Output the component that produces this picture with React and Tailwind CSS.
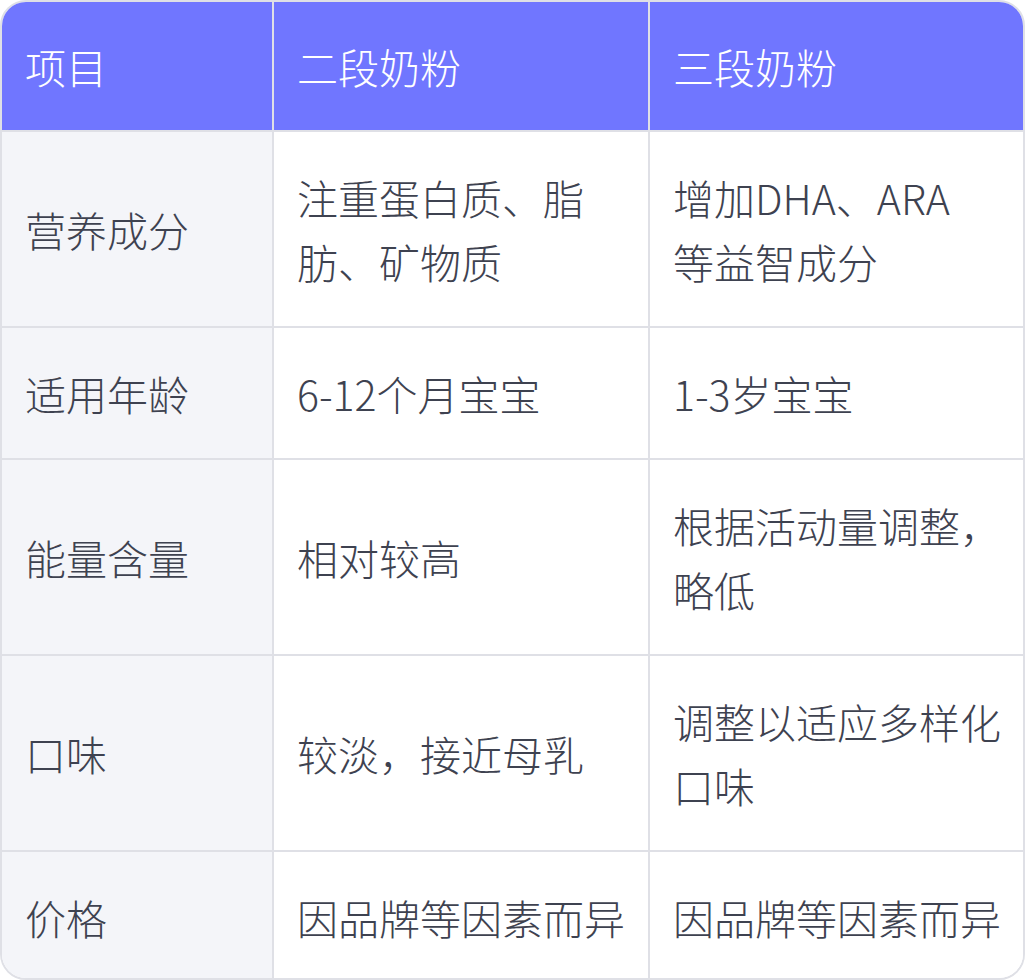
const COLUMNS = ['项目', '二段奶粉', '三段奶粉'];

// "\n" marks where the reference breaks the line
const ROWS = [
  ['营养成分', '注重蛋白质、脂\n肪、矿物质', '增加DHA、ARA\n等益智成分'],
  ['适用年龄', '6-12个月宝宝', '1-3岁宝宝'],
  ['能量含量', '相对较高', '根据活动量调整，\n略低'],
  ['口味', '较淡，接近母乳', '调整以适应多样化\n口味'],
  ['价格', '因品牌等因素而异', '因品牌等因素而异'],
];

function Cell({ text }) {
  const parts = text.split('\n');
  return parts.map((p, i) => (
    <span key={i}>
      {p}
      {i < parts.length - 1 && <br />}
    </span>
  ));
}

export default function App() {
  return (
    <div
      className="w-[1025px] h-[980px] bg-white"
      style={{ fontFamily: '"Noto Sans CJK SC", "Noto Sans", sans-serif' }}
    >
      <div className="w-[1025px] h-[980px] border-2 border-[#dfe0e6] rounded-[26px] overflow-hidden">
        <table className="w-full border-collapse table-fixed text-[41px] leading-[64px] font-light">
          <colgroup>
            <col className="w-[271px]" />
            <col className="w-[376px]" />
            <col />
          </colgroup>
          <thead>
            <tr className="bg-[#7076ff] text-white h-[129px]">
              {COLUMNS.map((c, i) => (
                <th
                  key={c}
                  className={`text-left font-light pl-[23px] pr-[12px] align-middle whitespace-nowrap ${
                    i > 0 ? 'border-l-2 border-[#dfe0e6]' : ''
                  }`}
                >
                  {c}
                </th>
              ))}
            </tr>
          </thead>
          <tbody className="text-[#3e4250]">
            {ROWS.map((row) => (
              <tr key={row[0]} className="border-t-2 border-[#dfe0e6]">
                {row.map((cell, i) => (
                  <td
                    key={i}
                    className={`pl-[23px] pr-[12px] py-[33px] align-middle whitespace-nowrap ${
                      i === 0 ? 'bg-[#f4f5f9]' : 'border-l-2 border-[#dfe0e6] bg-white'
                    }`}
                  >
                    <Cell text={cell} />
                  </td>
                ))}
              </tr>
            ))}
          </tbody>
        </table>
      </div>
    </div>
  );
}
